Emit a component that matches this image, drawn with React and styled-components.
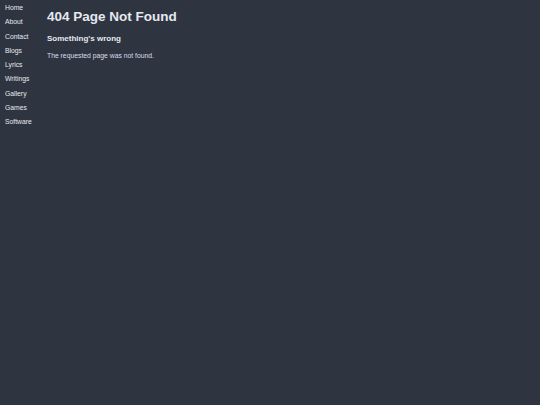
import React from "react";
import styled, { createGlobalStyle } from "styled-components";

const GlobalStyle = createGlobalStyle`
  html, body {
    margin: 0;
    padding: 0;
    background: #2f3441;
  }
  body {
    font-family: "Liberation Sans", Arial, sans-serif;
    font-size: 6.75px;
    color: #d8dee9;
  }
`;

const Page = styled.div`
  display: flex;
  min-height: 405px;
  background: #2f3441;
`;

const Nav = styled.nav`
  display: flex;
  flex-direction: column;
  width: 42px;
  padding: 1px 0 0 5px;
`;

const NavLink = styled.a`
  display: block;
  height: 14.3px;
  line-height: 14.3px;
  font-size: 6.8px;
  color: #e5e9f0;
  text-decoration: none;
`;

const Main = styled.main`
  display: flex;
  flex-direction: column;
`;

const Title = styled.h1`
  margin: 9px 0 10px;
  font-size: 13.5px;
  font-weight: bold;
  color: #e5e9f0;
`;

const Subtitle = styled.h3`
  margin: 0 0 9px;
  font-size: 8px;
  font-weight: bold;
  color: #e5e9f0;
`;

const Text = styled.p`
  margin: 0;
  font-size: 6.8px;
  color: #d8dee9;
`;

const links = ["Home", "About", "Contact", "Blogs", "Lyrics", "Writings", "Gallery", "Games", "Software"];

export default function App() {
  return (
    <>
      <GlobalStyle />
      <Page>
        <Nav>
          {links.map((l) => (
            <NavLink key={l} href="#">
              {l}
            </NavLink>
          ))}
        </Nav>
        <Main>
          <Title>404 Page Not Found</Title>
          <Subtitle>Something's wrong</Subtitle>
          <Text>The requested page was not found.</Text>
        </Main>
      </Page>
    </>
  );
}
